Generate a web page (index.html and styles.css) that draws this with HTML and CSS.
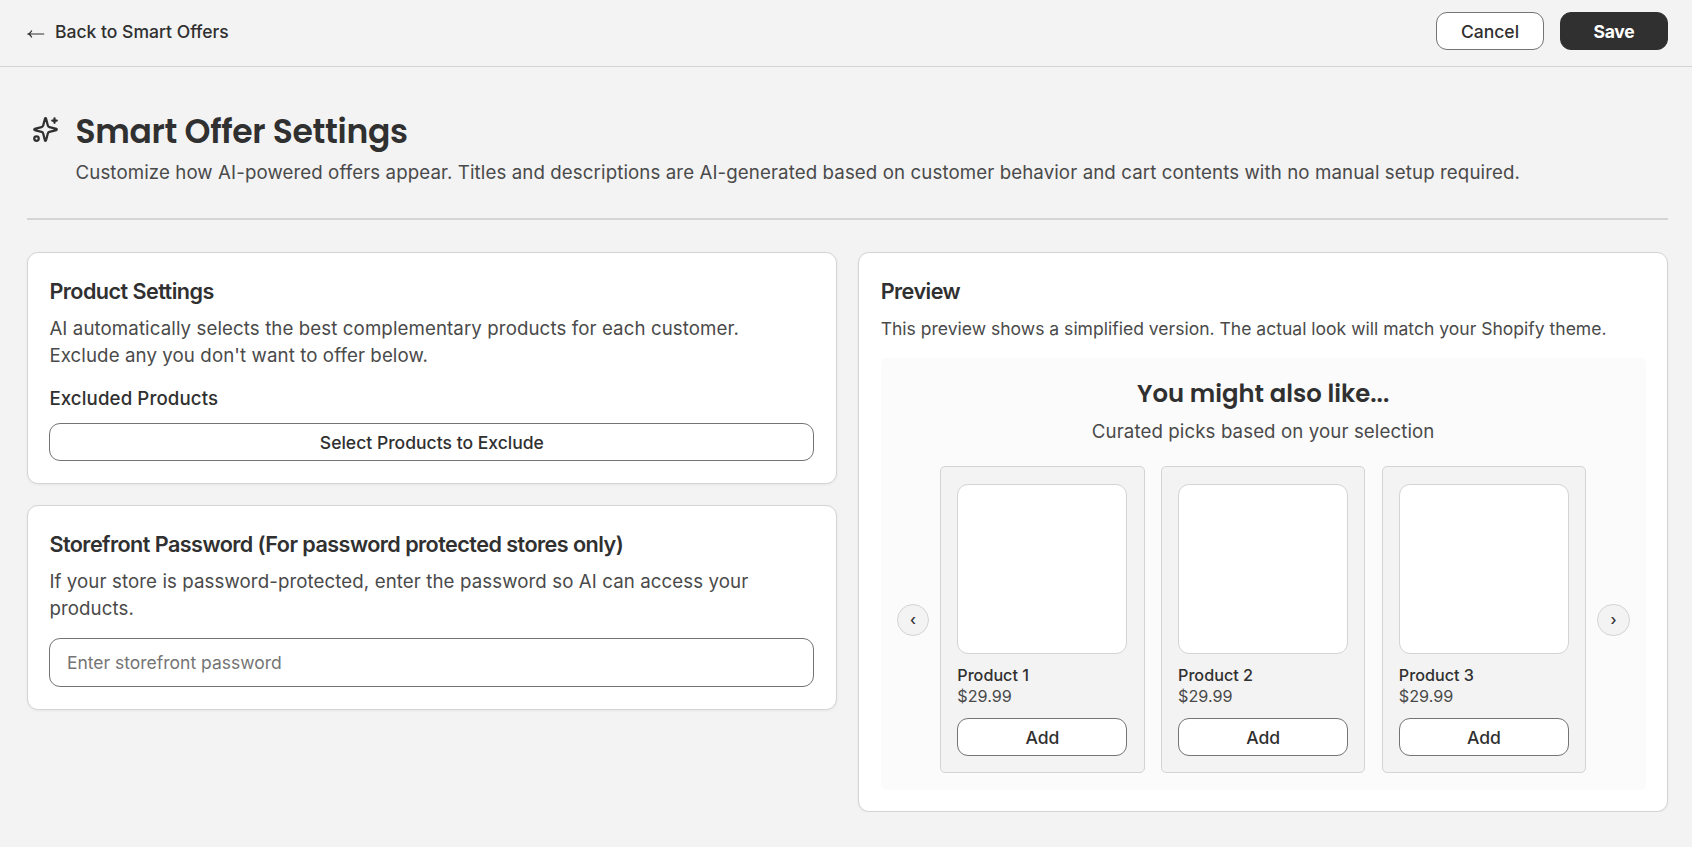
FILE: index.html
```html
<!DOCTYPE html>
<html lang="en">
<head>
<meta charset="utf-8">
<title>Smart Offer Settings</title>
<link rel="stylesheet" href="styles.css">
</head>
<body>
<header class="topbar">
  <a class="back"><svg class="back-arrow" width="18" height="10" viewBox="0 0 18 10"><path d="M1.2 5H17.2M4.8 1.6Q3.6 4.2 1.2 5Q3.6 5.8 4.8 8.4"/></svg><span>Back to Smart Offers</span></a>
  <div class="actions">
    <button class="btn top-btn cancel">Cancel</button>
    <button class="btn top-btn save">Save</button>
  </div>
</header>
<main class="page">
  <section class="intro">
    <svg class="spark" width="27" height="27" viewBox="0 0 24 24"><path d="M9.937 15.5A2 2 0 0 0 8.5 14.063l-6.135-1.582a.5.5 0 0 1 0-.962L8.5 9.936A2 2 0 0 0 9.937 8.5l1.582-6.135a.5.5 0 0 1 .963 0L14.063 8.5A2 2 0 0 0 15.5 9.937l6.135 1.581a.5.5 0 0 1 0 .964L15.5 14.063a2 2 0 0 0-1.437 1.437l-1.582 6.135a.5.5 0 0 1-.963 0z"/><path d="M20 2v4M22 4h-4"/><circle cx="4" cy="20" r="2"/></svg>
    <div>
      <h1 class="title">Smart Offer Settings</h1>
      <p class="subtitle">Customize how AI-powered offers appear. Titles and descriptions are AI-generated based on customer behavior and cart contents with no manual setup required.</p>
    </div>
  </section>
  <div class="columns">
    <div class="stack">
      <section class="card">
        <h2 class="card-title">Product Settings</h2>
        <p class="text">AI automatically selects the best complementary products for each customer. Exclude any you don't want to offer below.</p>
        <h3 class="label">Excluded Products</h3>
        <button class="btn wide">Select Products to Exclude</button>
      </section>
      <section class="card">
        <h2 class="card-title">Storefront Password (For password protected stores only)</h2>
        <p class="text">If your store is password-protected, enter the password so AI can access your products.</p>
        <input class="field" type="text" placeholder="Enter storefront password">
      </section>
    </div>
    <section class="card">
      <h2 class="card-title">Preview</h2>
      <p class="note">This preview shows a simplified version. The actual look will match your Shopify theme.</p>
      <div class="preview">
        <h3 class="preview-title">You might also like...</h3>
        <p class="preview-sub">Curated picks based on your selection</p>
        <div class="carousel">
          <button class="nav">‹</button>
          <div class="products">
            <article class="product"><div class="thumb"></div><div class="name">Product 1</div><div class="price">$29.99</div><button class="btn add">Add</button></article>
            <article class="product"><div class="thumb"></div><div class="name">Product 2</div><div class="price">$29.99</div><button class="btn add">Add</button></article>
            <article class="product"><div class="thumb"></div><div class="name">Product 3</div><div class="price">$29.99</div><button class="btn add">Add</button></article>
          </div>
          <button class="nav">›</button>
        </div>
      </div>
    </section>
  </div>
</main>
</body>
</html>
```
FILE: styles.css
```css
* { box-sizing: border-box; margin: 0; padding: 0; }
body { background: #f3f3f3; color: #303030; font-family: Inter, sans-serif; font-size: 18px; }
.topbar { height: 67px; padding: 12px 24px 0 27px; border-bottom: 1px solid #d4d4d4; display: flex; justify-content: space-between; align-items: flex-start; }
.back { display: flex; align-items: center; gap: 10px; height: 39px; font-size: 17.55px; font-weight: 500; }
.back-arrow { fill: none; stroke: #303030; stroke-width: 1.2; margin-top: 4px; }
.actions { display: flex; gap: 16px; }
.btn { display: block; height: 38px; padding-top: 2px; border: 1px solid #747474; border-radius: 11px; background: #fff; color: #303030; font-family: Inter, sans-serif; font-size: 17.55px; font-weight: 500; line-height: 34px; text-align: center; }
.top-btn { width: 108px; }
.save { background: #303030; border-color: #303030; color: #fff; font-weight: 700; letter-spacing: -.3px; }
.page { padding: 43px 24px 0 27px; }
.intro { display: flex; gap: 16.5px; height: 110px; padding-left: 5px; border-bottom: 2px solid #d4d4d4; }
.spark { flex: none; margin-top: 6px; fill: none; stroke: #303030; stroke-width: 2; stroke-linejoin: round; stroke-linecap: round; }
.title { font-family: Poppins, Inter, sans-serif; font-size: 33px; font-weight: 600; line-height: 44px; letter-spacing: -.33px; white-space: nowrap; }
.subtitle { color: #4a4a4a; font-size: 18.7px; line-height: 27px; margin-top: 5px; letter-spacing: .095px; white-space: nowrap; }
.columns { display: grid; grid-template-columns: 1fr 1fr; gap: 21.6px; margin-top: 32px; align-items: start; }
.stack { display: grid; gap: 21.4px; }
.card { background: #fff; border: 1px solid #d4d4d4; border-radius: 11px; padding: 21.4px 21.4px 21.6px; box-shadow: 0 1px 3px rgba(0,0,0,.05); }
.card-title { font-size: 21.6px; font-weight: 600; line-height: 34px; letter-spacing: -.55px; }
.text { color: #4a4a4a; font-size: 18.7px; line-height: 27px; letter-spacing: .09px; margin-top: 6.8px; }
.label { font-size: 18.7px; font-weight: 500; line-height: 27px; letter-spacing: .1px; margin: 15.8px 0 11.1px; }
.wide { width: 100%; }
.field { display: block; width: 100%; height: 49px; margin-top: 16px; padding: 0 16.5px; border: 1px solid #747474; border-radius: 11px; font: 400 17.5px Inter, sans-serif; }
.field::placeholder { color: #757575; }
.note { color: #4a4a4a; font-size: 17.55px; line-height: 26px; margin-top: 7.6px; }
.preview { margin-top: 16px; height: 431.7px; padding: 18px 16px 0; border-radius: 5px; background: #fbfbfb; }
.preview-title { font-family: Poppins, Inter, sans-serif; font-size: 24.3px; font-weight: 600; line-height: 36px; text-align: center; }
.preview-sub { color: #4a4a4a; font-size: 18.7px; line-height: 27px; letter-spacing: .09px; margin-top: 6px; text-align: center; }
.carousel { display: flex; align-items: center; gap: 11px; margin-top: 21.4px; }
.products { flex: 1; display: grid; grid-template-columns: repeat(3, 1fr); gap: 16.2px; }
.nav { width: 32.4px; height: 32.4px; border: 1px solid #d4d4d4; border-radius: 50%; background: #f3f3f3; color: #303030; font: 500 15px/28px Inter, sans-serif; }
.product { border: 1px solid #d4d4d4; border-radius: 5px; background: #f3f3f3; padding: 16.2px; height: 307px; }
.thumb { height: 170px; border: 1px solid #d4d4d4; border-radius: 11px; background: #fff; margin-bottom: 11.4px; }
.name { font-size: 16.2px; font-weight: 500; line-height: 21px; }
.price { color: #4a4a4a; font-size: 16.2px; line-height: 21px; }
.add { width: 100%; margin-top: 11px; }
```
